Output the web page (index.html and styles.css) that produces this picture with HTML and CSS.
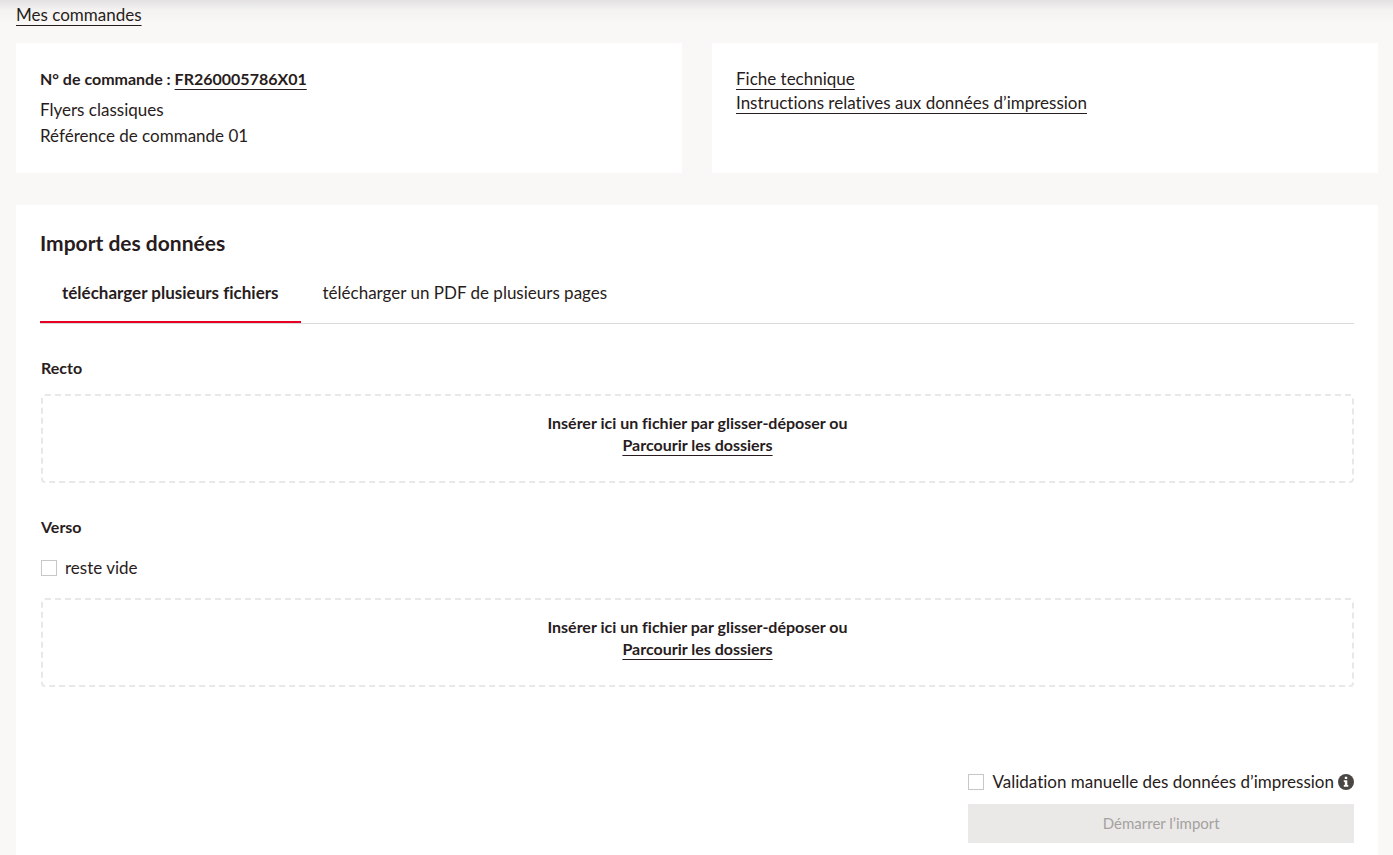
FILE: index.html
```html
<!DOCTYPE html>
<html lang="fr">
<head>
<meta charset="utf-8">
<meta name="viewport" content="width=device-width, initial-scale=1">
<title>Import des données</title>
<link rel="stylesheet" href="styles.css">
</head>
<body>
<main class="page">
  <nav class="breadcrumb"><a class="link" href="#">Mes commandes</a></nav>

  <div class="summary">
    <section class="card">
      <p class="order-number">N° de commande : <a class="link" href="#">FR260005786X01</a></p>
      <p class="order-detail">Flyers classiques</p>
      <p class="order-detail">Référence de commande 01</p>
    </section>
    <section class="card">
      <ul class="doc-list">
        <li><a class="link" href="#">Fiche technique</a></li>
        <li><a class="link" href="#">Instructions relatives aux données d’impression</a></li>
      </ul>
    </section>
  </div>

  <section class="card upload">
    <h1 class="title">Import des données</h1>
    <div class="tabs" role="tablist">
      <button class="tab tab-active" type="button" role="tab" aria-selected="true">télécharger plusieurs fichiers</button>
      <button class="tab" type="button" role="tab" aria-selected="false">télécharger un PDF de plusieurs pages</button>
    </div>

    <div class="sides">
      <section class="side">
        <h2 class="side-title">Recto</h2>
        <div class="dropzone">
          <p>Insérer ici un fichier par glisser-déposer ou</p>
          <button class="link browse" type="button">Parcourir les dossiers</button>
        </div>
      </section>
      <section class="side">
        <h2 class="side-title">Verso</h2>
        <label class="check check-empty"><input class="box" type="checkbox">reste vide</label>
        <div class="dropzone">
          <p>Insérer ici un fichier par glisser-déposer ou</p>
          <button class="link browse" type="button">Parcourir les dossiers</button>
        </div>
      </section>
    </div>

    <div class="actions">
      <div class="validation">
        <label class="check"><input class="box" type="checkbox">Validation manuelle des données d’impression</label>
        <svg class="info" viewBox="0 0 16 16" aria-hidden="true">
          <circle cx="8" cy="8" r="8" fill="#4a4644"/>
          <path fill="#fff" d="M6.8 2.8h2.4v2.3H6.8zM5.8 6.3h3.5v4.8h1v1.6H5.8v-1.6h1V7.9h-1z"/>
        </svg>
      </div>
      <button class="submit" type="button" disabled>Démarrer l’import</button>
    </div>
  </section>
</main>
</body>
</html>
```
FILE: styles.css
```css
* {
  box-sizing: border-box;
}

body {
  margin: 0;
  background: #f9f8f6 linear-gradient(#e3e1e2, #f3f2f1 40%, #f9f8f6) 0 0 / 100% 24px no-repeat;
  color: #281c20;
  font-family: Lato, "Open Sans", sans-serif;
  font-size: 17px;
  font-variant-ligatures: none;
  line-height: 24px;
}

p, h1, h2, ul {
  margin: 0;
  padding: 0;
}

button {
  border: 0;
  background: none;
  color: inherit;
  font: inherit;
  font-variant-ligatures: none;
}

.page {
  padding: 3px 15px 0 16px;
}

.breadcrumb {
  display: flex;
  margin-bottom: 16px;
}

.link {
  color: inherit;
  text-decoration: underline;
  text-decoration-thickness: 1px;
  text-underline-offset: 4px;
  text-decoration-skip-ink: none;
}

.summary {
  display: grid;
  grid-template-columns: 1fr 1fr;
  gap: 30px;
  margin-bottom: 32px;
}

.card {
  padding: 24px;
  background: #fff;
}

.order-number {
  margin-bottom: 6px;
  font-size: 16px;
  font-weight: 700;
}

.order-detail {
  line-height: 26px;
}

.doc-list {
  list-style: none;
}

.title {
  font-size: 21px;
  font-weight: 700;
  line-height: 28px;
}

.tabs {
  display: flex;
  margin-top: 8px;
  border-bottom: 1px solid #dadada;
}

.tab {
  padding: 16px 22px;
  border-bottom: 2px solid transparent;
}

.tab-active {
  border-bottom-color: #e60023;
  font-weight: 700;
}

.sides {
  display: grid;
  gap: 32px;
  margin-top: 32px;
  padding-left: 1px;
}

.side-title {
  margin-bottom: 14px;
  font-size: 16px;
  font-weight: 700;
}

.check {
  display: flex;
  align-items: center;
  gap: 8px;
}

.check-empty {
  margin: 17px 0 18px;
}

.box {
  appearance: none;
  flex: none;
  width: 16px;
  height: 16px;
  margin: 0;
  border: 1px solid #c8c6c6;
  background: #fff;
}

.dropzone {
  padding: 16px 16px 25px;
  border: 2px dashed #e9e8e8;
  border-radius: 4px;
  font-size: 16px;
  font-weight: 700;
  line-height: 22px;
  text-align: center;
}

.browse {
  display: block;
  margin: 0 auto;
  padding: 0;
}

.actions {
  width: fit-content;
  margin: 83px 0 0 auto;
}

.validation {
  display: flex;
  align-items: center;
  gap: 4px;
  margin-bottom: 10px;
}

.info {
  width: 16px;
  height: 16px;
}

.submit {
  width: 100%;
  padding: 8px;
  background: #eae9e7;
  color: #a5a1a1;
  font-size: 15px;
  line-height: 23px;
}
```
